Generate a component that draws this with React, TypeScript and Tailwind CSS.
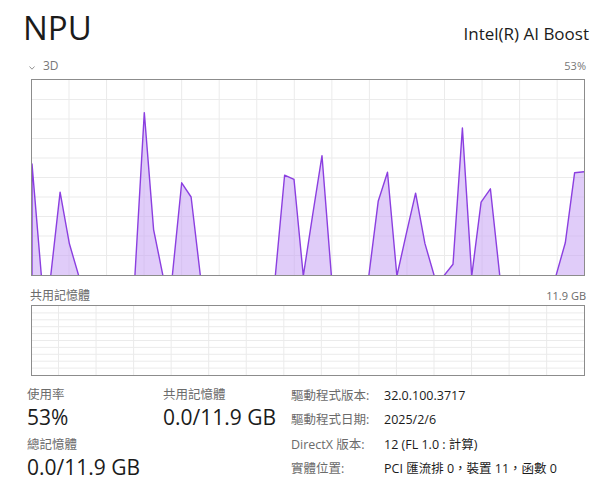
const usage = [
  57, 0, 0, 42.5, 16, 0, 0, 0, 0, 0, 0, 0, 83.3, 23.3, 0, 0, 47.3, 40, 0, 0,
  0, 0, 0, 0, 0, 0, 0, 51.2, 49.1, 0, 31, 61.2, 0, 0, 0, 0, 0, 37.8, 52.7, 0,
  21, 42, 16.2, 0, 0, 5.5, 75.4, 0, 37.4, 44.2, 0, 0, 0, 0, 0, 0, 0, 16.5, 52.4, 52.9,
];

function Graph({ w, h, rows, offset, data }: { w: number; h: number; rows: number; offset: number; data?: number[] }) {
  const cols: number[] = [];
  for (let x = offset; x < w; x += 37.55) cols.push(x);
  const lines: number[] = [];
  for (let i = 1; i < rows; i++) lines.push((h / rows) * i);

  let pts = "";
  if (data) {
    const step = w / (data.length - 1);
    pts = data.map((v, i) => `${(i * step).toFixed(1)},${v === 0 ? h + 1 : (h - (v / 100) * h).toFixed(1)}`).join(" ");
  }

  return (
    <div className="border border-[#8c8c8c] bg-white">
      <svg width={w} height={h} className="block overflow-hidden">
        {lines.map((y) => (
          <line key={"h" + y} x1={0} x2={w} y1={y} y2={y} stroke="#ebebeb" strokeWidth={1} />
        ))}
        {cols.map((x) => (
          <line key={"v" + x} x1={x} x2={x} y1={0} y2={h} stroke="#ebebeb" strokeWidth={1} />
        ))}
        {data && (
          <>
            <polygon points={`0,${h + 1} ${pts} ${w},${h + 1}`} fill="#c6a3f4" fillOpacity={0.55} />
            <polyline points={`0,${h + 1} ${pts}`} fill="none" stroke="#8b3fe0" strokeWidth={1.4} strokeLinejoin="round" />
          </>
        )}
      </svg>
    </div>
  );
}

export default function App() {
  return (
    <div className="w-[600px] h-[490px] bg-white overflow-hidden font-['Open_Sans','Noto_Sans_CJK_TC',sans-serif] text-[#1b1b1b]">
      <div className="flex items-baseline justify-between pl-[23px] pr-[11px] pt-[8px]">
        <div className="text-[33px] leading-[40px]">NPU</div>
        <div className="text-[17px]">Intel(R) AI Boost</div>
      </div>

      <div className="flex items-center justify-between pl-[29px] pr-[14px] mt-[10px] h-[16px] text-[#777]">
        <div className="flex items-center">
          <svg width="6" height="4" viewBox="0 0 6 4" className="mr-[8px] mt-[3px]">
            <path d="M0.5 0.5 L3 3.2 L5.5 0.5" fill="none" stroke="#888" strokeWidth="0.9" />
          </svg>
          <span className="text-[12px] leading-[16px]">3D</span>
        </div>
        <span className="text-[11px] leading-[16px]">53%</span>
      </div>

      <div className="ml-[31px] mt-[5px] w-[554px]">
        <Graph w={552} h={195} rows={10} offset={37} data={usage} />
      </div>

      <div className="flex justify-between pl-[30px] pr-[14px] mt-[12px] text-[#6b6b6b]">
        <span className="text-[12px] leading-[16px]">共用記憶體</span>
        <span className="text-[11px] leading-[16px]">11.9 GB</span>
      </div>

      <div className="ml-[31px] mt-[1px] w-[554px]">
        <Graph w={552} h={69} rows={10} offset={26.5} />
      </div>

      <div className="flex pl-[27px] mt-[11px]">
        <div className="w-[136px]">
          <div className="text-[12.5px] leading-[15px] text-[#6b6b6b]">使用率</div>
          <div className="text-[21px] leading-[31px]">53%</div>
          <div className="text-[12.5px] leading-[15px] text-[#6b6b6b] mt-[4px]">總記憶體</div>
          <div className="text-[21px] leading-[31px]">0.0/11.9 GB</div>
        </div>
        <div className="w-[128px]">
          <div className="text-[12.5px] leading-[15px] text-[#6b6b6b]">共用記憶體</div>
          <div className="text-[21px] leading-[31px]">0.0/11.9 GB</div>
        </div>
        <div className="grid grid-cols-[93px_auto] text-[12.5px] leading-[19px] -mt-[1px]">
          <span className="text-[#6b6b6b]">驅動程式版本:</span>
          <span>32.0.100.3717</span>
          <span className="text-[#6b6b6b]">驅動程式日期:</span>
          <span>2025/2/6</span>
          <span className="text-[#6b6b6b]">DirectX 版本:</span>
          <span>12 (FL 1.0 : 計算)</span>
          <span className="text-[#6b6b6b]">實體位置:</span>
          <span>PCI 匯流排 0，裝置 11，函數 0</span>
        </div>
      </div>
    </div>
  );
}
